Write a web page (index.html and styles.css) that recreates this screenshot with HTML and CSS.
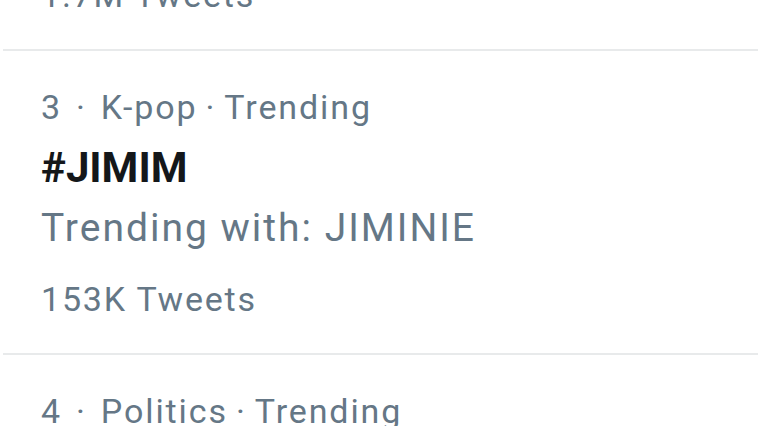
FILE: index.html
```html
<!DOCTYPE html>
<html>
<head>
<meta charset="utf-8">
<link rel="stylesheet" href="styles.css">
</head>
<body>
<div class="list">
  <div class="item item-partial">
    <div class="count">1.7M Tweets</div>
  </div>
  <div class="item">
    <div class="meta"><span class="rank">3</span><span class="dot">·</span><span>K-pop</span><span class="dot2">·</span><span>Trending</span></div>
    <div class="title">#JIMIM</div>
    <div class="desc">Trending with: JIMINIE</div>
    <div class="count">153K Tweets</div>
  </div>
  <div class="item">
    <div class="meta"><span class="rank">4</span><span class="dot">·</span><span>Politics</span><span class="dot2">·</span><span>Trending</span></div>
  </div>
</div>
</body>
</html>
```
FILE: styles.css
```css
html, body {
  margin: 0;
  padding: 0;
  background: #ffffff;
  overflow: hidden;
}
body {
  font-family: Roboto, "Noto Sans", sans-serif;
  color: #657786;
}
.list {
  margin-top: -25px;
  display: flex;
  flex-direction: column;
}
.item {
  padding: 36px 0 34px 38px;
  border-bottom: 2px solid #e8eaeb;
  margin-left: 3px;
}
.item-partial {
  padding-top: 0;
  padding-bottom: 34px;
}
.meta {
  font-size: 34px;
  line-height: 40px;
  letter-spacing: 1.9px;
  display: flex;
  white-space: nowrap;
}
.dot {
  margin: 0 14px 0 14px;
}
.dot2 {
  margin: 0 8px 0 8px;
}
.title {
  margin-top: 16px;
  font-size: 42px;
  line-height: 50px;
  font-weight: 700;
  color: #14171a;
}
.desc {
  margin-top: 12px;
  font-size: 39px;
  line-height: 46px;
  letter-spacing: 2px;
}
.count {
  font-size: 34px;
  line-height: 40px;
  letter-spacing: 1.8px;
}
.desc + .count {
  margin-top: 28px;
}
```
